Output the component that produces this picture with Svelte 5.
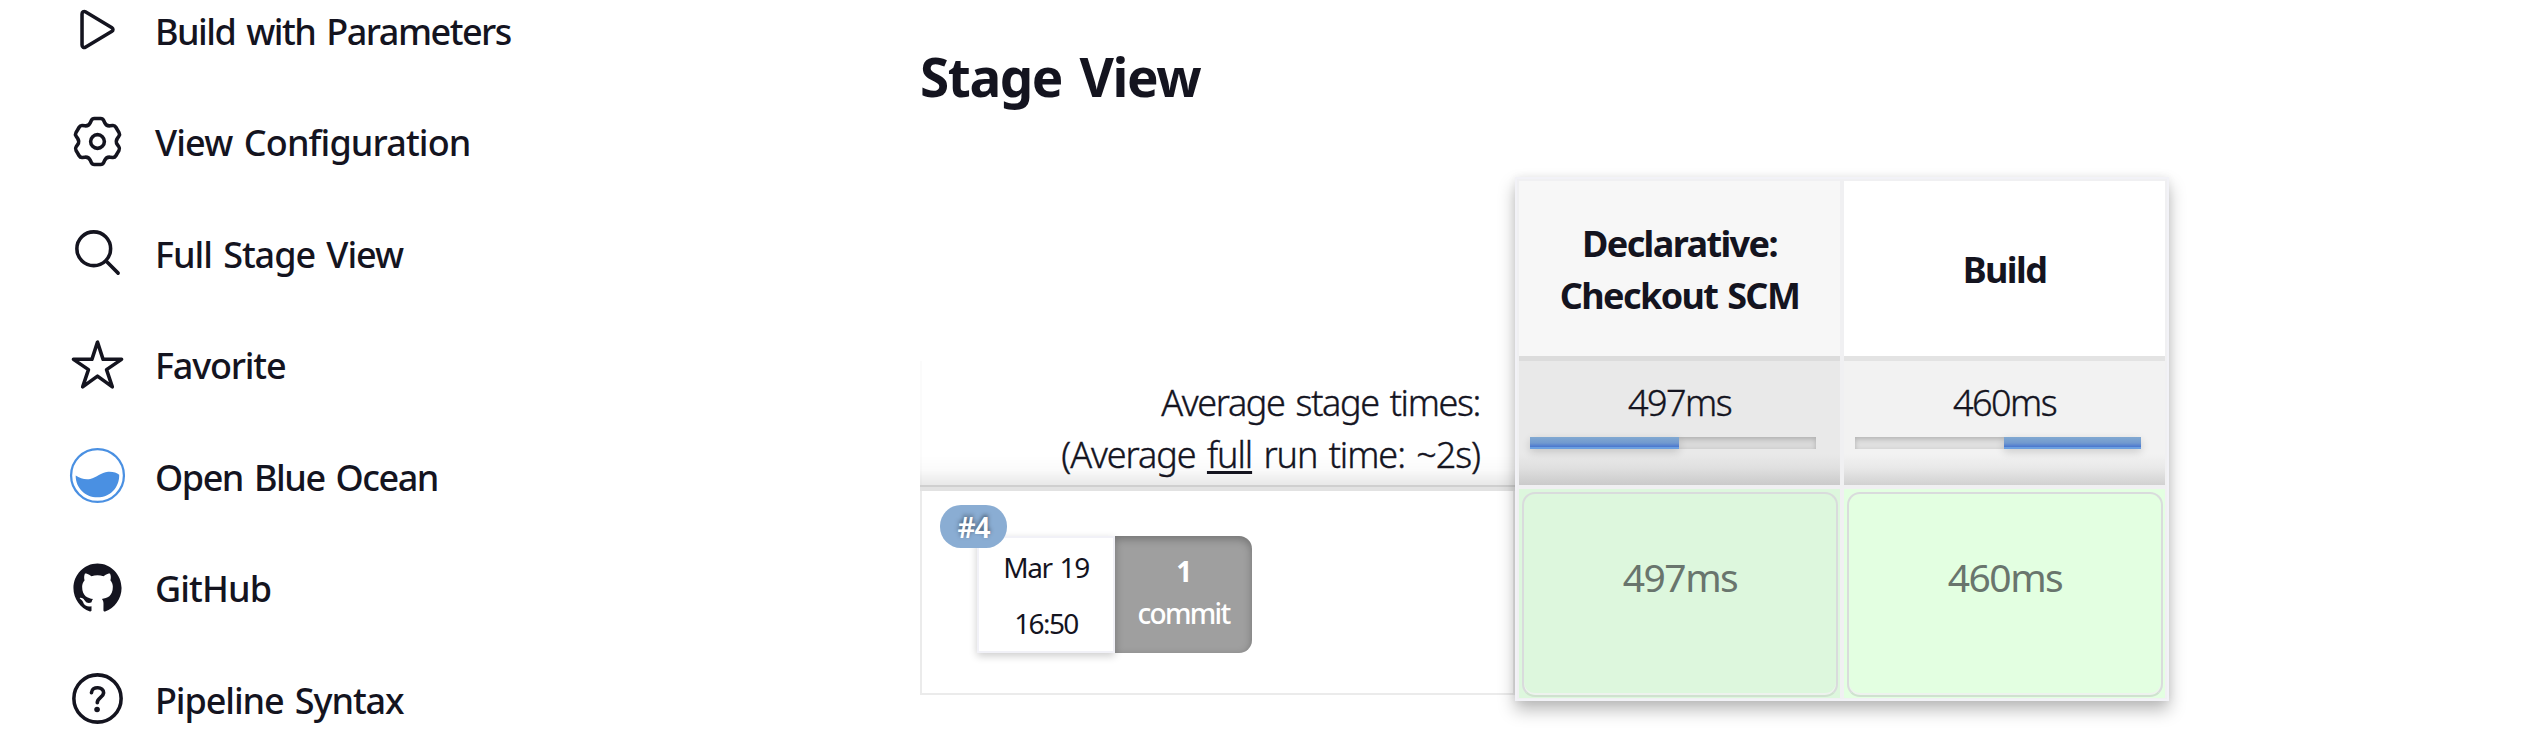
<script>
  const links = [
    { icon: 'play', label: 'Build with Parameters', spacing: -1.5 },
    { icon: 'gear', label: 'View Configuration', spacing: -0.88 },
    { icon: 'search', label: 'Full Stage View', spacing: -1.05 },
    { icon: 'star', label: 'Favorite', spacing: -1.2 },
    { icon: 'ocean', label: 'Open Blue Ocean', spacing: -1.45 },
    { icon: 'github', label: 'GitHub', spacing: -0.9 },
    { icon: 'help', label: 'Pipeline Syntax', spacing: -1.1 }
  ];
  const stages = [
    { name: ['Declarative:', 'Checkout SCM'], time: '497ms', before: 0, share: 52 },
    { name: ['Build'], time: '460ms', before: 52, share: 48 }
  ];

  // Six-toothed gear outline with softened corners.
  function gearPath() {
    const points = [];
    for (let k = 0; k < 6; k++) {
      const tooth = k * 60 - 90;
      for (const [angle, radius] of [[tooth - 13, 220], [tooth + 13, 220], [tooth + 30, 164]]) {
        const a = (angle * Math.PI) / 180;
        points.push([256 + radius * Math.cos(a), 256 + radius * Math.sin(a)]);
      }
    }
    const toward = (p, q, d) => {
      const t = d / Math.hypot(q[0] - p[0], q[1] - p[1]);
      return (p[0] + (q[0] - p[0]) * t).toFixed(1) + ' ' + (p[1] + (q[1] - p[1]) * t).toFixed(1);
    };
    const n = points.length;
    return points.map((p, i) => {
      const d = i % 3 === 2 ? 36 : 20;
      return (i ? 'L' : 'M') + toward(p, points[(i + n - 1) % n], d) +
        'Q' + p[0].toFixed(1) + ' ' + p[1].toFixed(1) + ' ' + toward(p, points[(i + 1) % n], d);
    }).join('') + 'Z';
  }
</script>

<div class="page">
  <nav>
    {#each links as link}
      <div class="task">
        <svg class="icon" viewBox="0 0 512 512" fill="none" stroke="currentColor" stroke-width="33" stroke-linecap="round" stroke-linejoin="round">
          {#if link.icon === 'play'}
            <path d="M112 111v290c0 17.44 17 28.52 31 20.16l247.9-148.37c12.12-7.25 12.12-26.33 0-33.58L143 90.84c-14-8.36-31 2.72-31 20.16z" />
          {:else if link.icon === 'gear'}
            <circle cx="256" cy="256" r="64" />
            <path d={gearPath()} />
          {:else if link.icon === 'search'}
            <path d="M221.09 64a157.09 157.09 0 10157.09 157.09A157.1 157.1 0 00221.09 64z" />
            <path d="M338.29 338.29L448 448" />
          {:else if link.icon === 'star'}
            <path d="M480 208H308L256 48l-52 160H32l140 96-54 160 138-100 138 100-54-160z" />
          {:else if link.icon === 'ocean'}
            <g stroke="none">
              <circle cx="256" cy="256" r="246" fill="#fff" stroke="#4a90e2" stroke-width="21" />
              <path fill="#4a90e2" d="M53 255C92 280 137 297 188 288C250 278 286 227 355 222C400 219 434 231 458 248C461 370 370 459 256 459C142 459 51 370 53 255Z" />
            </g>
          {:else if link.icon === 'github'}
            <path fill="currentColor" stroke="none" d="M256 32C132.3 32 32 134.9 32 261.7c0 101.5 64.2 187.5 153.2 217.9a17.56 17.56 0 003.8.4c8.3 0 11.5-6.1 11.5-11.4 0-5.5-.2-19.9-.3-39.1a102.4 102.4 0 01-22.6 2.7c-43.1 0-52.9-33.5-52.9-33.5-10.2-26.5-24.9-33.6-24.9-33.6-19.5-13.7-.1-14.1 1.4-14.1h.1c22.5 2 34.3 23.8 34.3 23.8 11.2 19.6 26.2 25.1 39.6 25.1a63 63 0 0025.6-6c2-14.8 7.8-24.9 14.2-30.7-49.7-5.8-102-25.5-102-113.5 0-25.1 8.7-45.6 23-61.6-2.3-5.8-10-29.2 2.2-60.8a18.64 18.64 0 015-.5c8.1 0 26.4 3.1 56.6 24.1a208.21 208.21 0 01112.2 0c30.2-21 48.5-24.1 56.6-24.1a18.64 18.64 0 015 .5c12.2 31.6 4.5 55 2.2 60.8 14.3 16.1 23 36.6 23 61.6 0 88.2-52.4 107.6-102.3 113.3 8 7.1 15.2 21.1 15.2 42.5 0 30.7-.3 55.5-.3 63 0 5.4 3.1 11.5 11.4 11.5a19.35 19.35 0 004-.4C415.9 449.2 480 363.1 480 261.7 480 134.9 379.7 32 256 32z" />
          {:else}
            <circle cx="256" cy="256" r="220" />
            <path stroke-width="34" d="M200 202c4-66 116-58 113 2c-2 40-59 45-59 92" />
            <circle cx="252" cy="358" r="26" fill="currentColor" stroke="none" />
          {/if}
        </svg>
        <span style="letter-spacing:{link.spacing}px">{link.label}</span>
      </div>
    {/each}
  </nav>

  <main>
    <h2>Stage View</h2>
    <div class="pipeline">
      <div class="runs">
        <div class="averages">
          <div class="stage-average">Average stage times:</div>
          <div class="run-average">(Average <u>full</u> run time: ~2s)</div>
        </div>
        <div class="rule"></div>
        <div class="run">
          <div class="date"><span>Mar 19</span><span class="clock">16:50</span></div>
          <div class="commits"><b>1</b><span>commit</span></div>
          <div class="badge">#4</div>
        </div>
      </div>
      <div class="stages">
        {#each stages as stage, i}
          <div class="stage" class:first={i === 0}>
            <div class="name">
              {#each stage.name as line}<div>{line}</div>{/each}
            </div>
            <div class="average">
              <div class="time">{stage.time}</div>
              <div class="bar">
                <div class="fill" style="margin-left:{stage.before}%;width:{stage.share}%"></div>
              </div>
            </div>
            <div class="result"><div class="cell"><span>{stage.time}</span></div></div>
          </div>
        {/each}
      </div>
    </div>
  </main>
</div>

<style>
  :global(body) { background: #fff; overflow: hidden; }
  .page {
    display: flex;
    height: 752px;
    overflow: hidden;
    color: #14141f;
    font-family: "Noto Sans", "Open Sans", sans-serif;
    font-size: 36px;
    line-height: 52px;
    white-space: nowrap;
  }
  nav { width: 920px; flex: none; margin-top: -26.2px; }
  .task { display: flex; align-items: center; height: 111.5px; padding-left: 70px; font-weight: 500; word-spacing: 3px; }
  .task span { padding-top: 4.5px; margin-left: 30px; }
  .icon { width: 55px; height: 55px; flex: none; overflow: visible; }
  main { flex: none; width: 1250px; }
  h2 { margin: 0; padding-top: 47px; height: 130px; font-size: 53px; line-height: 60px; font-weight: 700; letter-spacing: -1.4px; word-spacing: 5px; }
  .pipeline { display: flex; align-items: flex-start; }
  .runs { width: 595px; padding-top: 184px; flex: none; }
  .averages {
    height: 124px;
    box-sizing: border-box;
    padding: 16px 35px 0 0;
    text-align: right;
    background: linear-gradient(to bottom, rgba(0,0,0,0) 76%, rgba(0,0,0,.02) 88%, rgba(0,0,0,.09));
    border-left: 2px solid rgba(0,0,0,.015);
    font-weight: 300;
    -webkit-text-stroke: .4px #14141f;
    word-spacing: 3px;
  }
  .stage-average { letter-spacing: -1.35px; }
  .run-average { letter-spacing: -1.05px; }
  .averages u { text-decoration-thickness: 3px; text-underline-offset: 3px; }
  .rule { height: 4px; background: #e2e2e2; border-top: 2px solid #cfcfcf; }
  .run {
    position: relative;
    display: flex;
    height: 203.5px;
    box-sizing: border-box;
    padding: 45px 0 0 55px;
    border: 2px solid #ebebeb;
    border-top: 0;
    font-size: 28px;
    letter-spacing: -1.4px;
    word-spacing: 2px;
  }
  .date {
    display: flex; flex-direction: column; align-items: center;
    width: 138px; height: 117px; box-sizing: border-box;
    border: 2px solid #f1f1f7; background: #fff;
    box-shadow: 0 3px 8px rgba(0,0,0,.2);
    line-height: 56px; padding-top: 1px;
  }
  .clock { letter-spacing: -1.6px; }
  .commits {
    display: flex; flex-direction: column; align-items: center;
    width: 137px; height: 117px; box-sizing: border-box; padding-top: 14px;
    border-radius: 0 13px 13px 0; background: #9f9f9f; color: #fff;
    line-height: 42px; font-weight: 500; letter-spacing: -1.7px;
    box-shadow: inset 0 3px 8px rgba(0,0,0,.28);
  }
  .badge {
    position: absolute; left: 18px; top: 14px; width: 67px; height: 43px;
    border-radius: 21px; background: #8aadd3; color: #fff;
    line-height: 45px; text-align: center; font-weight: 600; letter-spacing: -1px;
    text-shadow: 0 -2px 4px rgba(0,0,0,.5);
  }
  .stages {
    position: relative; display: flex; width: 654px; height: 524px; box-sizing: border-box;
    border: 2px solid #f2f2f7; background: #f0f0f2;
    box-shadow: 0 9px 16px rgba(0,0,0,.27), 0 0 8px rgba(0,0,0,.06);
  }
  .stage { width: 325px; box-sizing: border-box; padding: 2px; text-align: center; }
  .name {
    display: flex; flex-direction: column; justify-content: center; height: 175px; box-sizing: content-box;
    background: #fff; font-weight: 700; letter-spacing: -1.6px; word-spacing: 2px; border-bottom: 5px solid #e3e3e3;
  }
  .name div { position: relative; top: 1px; }
  .first .name { background: #f7f7f7; border-color: #dcdcdc; }
  .average {
    height: 124px; box-sizing: border-box; padding: 16px 24px 0 11px;
    background: linear-gradient(to bottom, #f2f2f2 75%, #e9e9e9 86%, #d1d1d1);
  }
  .first .average { background: linear-gradient(to bottom, #e9e9e9 75%, #e0e0e0 86%, #cacaca); }
  .time { padding-left: 13px; letter-spacing: -1.5px; font-weight: 300; -webkit-text-stroke: .4px #14141f; }
  .bar { height: 12px; margin-top: 8px; background: #dfdfdf; box-shadow: inset 0 2px 5px rgba(0,0,0,.2); }
  .first .bar { background: #d9d9d9; }
  .fill {
    height: 12px; box-sizing: border-box; border-bottom: 2px solid #6b9fe0;
    background: linear-gradient(to bottom, #82a9d1, #7199cf 60%, #4976cf);
    background-clip: padding-box; box-shadow: 0 3px 8px rgba(0,0,0,.16);
  }
  .result { height: 209px; margin-top: 4px; box-sizing: border-box; padding: 2.5px 2px 1.5px 3px; background: #e3ffe1; }
  .first .result { background: #ddf7dd; }
  .cell {
    display: flex; align-items: center; justify-content: center;
    height: 205px; box-sizing: border-box; padding-bottom: 35px;
    border: 2px solid #d9dbdc; border-bottom-color: #cfe2cf; border-radius: 13px;
    font-size: 39px; color: #69756d; letter-spacing: -1.5px;
    box-shadow: inset 0 -2px 0 #eef2ee;
  }
</style>
